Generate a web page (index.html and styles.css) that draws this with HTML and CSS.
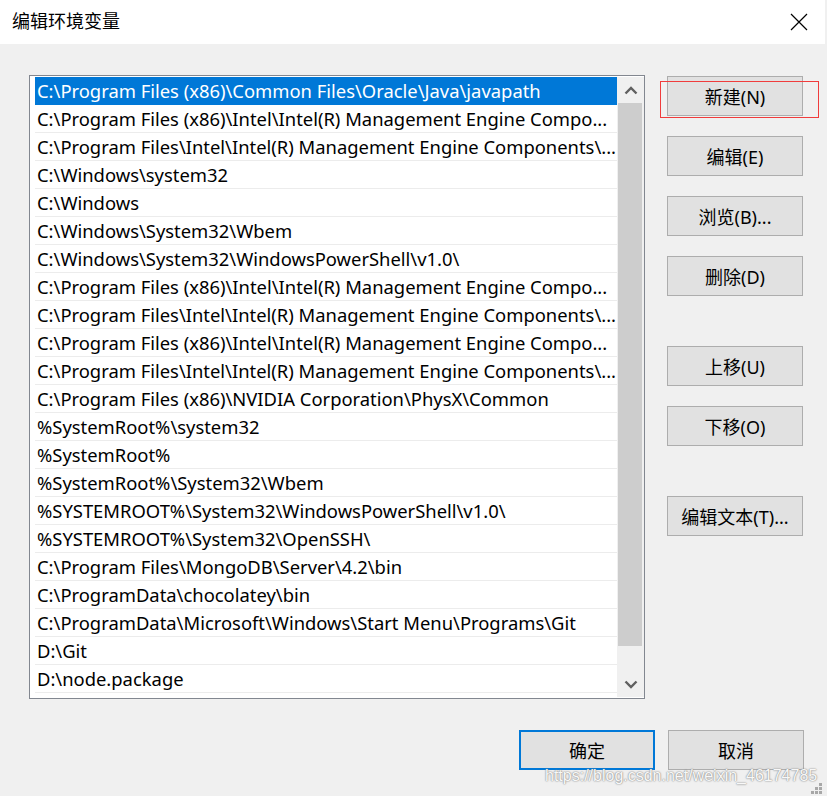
FILE: index.html
```html
<!DOCTYPE html>
<html>
<head>
  <meta charset="UTF-8">
  <title>编辑环境变量</title>
  <link rel="stylesheet" href="styles.css">
</head>
<body>
  <div class="dialog">
    <div class="titlebar">
      <span class="title">编辑环境变量</span>
      <svg class="close" width="18" height="18" viewBox="0 0 18 18">
        <path d="M1 1 L17 17 M17 1 L1 17" stroke="#000" stroke-width="1.2" fill="none"/>
      </svg>
    </div>

    <div class="content">
      <div class="main">
        <div class="listbox">
          <ul class="rows">
            <li class="selected">C:\Program Files (x86)\Common Files\Oracle\Java\javapath</li>
            <li>C:\Program Files (x86)\Intel\Intel(R) Management Engine Compo...</li>
            <li>C:\Program Files\Intel\Intel(R) Management Engine Components\...</li>
            <li>C:\Windows\system32</li>
            <li>C:\Windows</li>
            <li>C:\Windows\System32\Wbem</li>
            <li>C:\Windows\System32\WindowsPowerShell\v1.0\</li>
            <li>C:\Program Files (x86)\Intel\Intel(R) Management Engine Compo...</li>
            <li>C:\Program Files\Intel\Intel(R) Management Engine Components\...</li>
            <li>C:\Program Files (x86)\Intel\Intel(R) Management Engine Compo...</li>
            <li>C:\Program Files\Intel\Intel(R) Management Engine Components\...</li>
            <li>C:\Program Files (x86)\NVIDIA Corporation\PhysX\Common</li>
            <li>%SystemRoot%\system32</li>
            <li>%SystemRoot%</li>
            <li>%SystemRoot%\System32\Wbem</li>
            <li>%SYSTEMROOT%\System32\WindowsPowerShell\v1.0\</li>
            <li>%SYSTEMROOT%\System32\OpenSSH\</li>
            <li>C:\Program Files\MongoDB\Server\4.2\bin</li>
            <li>C:\ProgramData\chocolatey\bin</li>
            <li>C:\ProgramData\Microsoft\Windows\Start Menu\Programs\Git</li>
            <li>D:\Git</li>
            <li>D:\node.package</li>
          </ul>
          <div class="scrollbar">
            <div class="arrow">
              <svg width="14" height="9" viewBox="0 0 14 9"><path d="M1.5 7.5 L7 2 L12.5 7.5" stroke="#606060" stroke-width="2.4" fill="none"/></svg>
            </div>
            <div class="thumb"></div>
            <div class="track"></div>
            <div class="arrow">
              <svg width="14" height="9" viewBox="0 0 14 9"><path d="M1.5 1.5 L7 7 L12.5 1.5" stroke="#606060" stroke-width="2.4" fill="none"/></svg>
            </div>
          </div>
        </div>

        <div class="side">
          <div class="group">
            <button class="btn">新建(N)</button>
            <button class="btn">编辑(E)</button>
            <button class="btn">浏览(B)...</button>
            <button class="btn">删除(D)</button>
          </div>
          <div class="group">
            <button class="btn">上移(U)</button>
            <button class="btn">下移(O)</button>
          </div>
          <div class="group">
            <button class="btn">编辑文本(T)...</button>
          </div>
        </div>
      </div>

      <div class="footer">
        <button class="btn default">确定</button>
        <button class="btn">取消</button>
      </div>
    </div>

    <div class="highlight"></div>
    <div class="watermark">https://blog.csdn.net/weixin_46174785</div>
    <svg class="grip" width="12" height="12" viewBox="0 0 12 12">
      <rect x="8" y="0" width="3" height="3" fill="#a8a8a8"/>
      <rect x="4" y="4" width="3" height="3" fill="#a8a8a8"/>
      <rect x="8" y="4" width="3" height="3" fill="#a8a8a8"/>
      <rect x="0" y="8" width="3" height="3" fill="#a8a8a8"/>
      <rect x="4" y="8" width="3" height="3" fill="#a8a8a8"/>
      <rect x="8" y="8" width="3" height="3" fill="#a8a8a8"/>
    </svg>
  </div>
</body>
</html>
```

FILE: styles.css
```css
body {
  margin: 0;
  background-color: #f0f0f0;
  font-family: "Noto Sans", "Noto Sans CJK SC", sans-serif;
  font-size: 18px;
  color: #000;
}

.dialog {
  position: relative;
  width: 825px;
  height: 796px;
  background-color: #f0f0f0;
}

.titlebar {
  height: 44px;
  background-color: white;
  display: flex;
  align-items: center;
  justify-content: space-between;
  padding: 0 17px 0 12px;
}

.title {
  font-size: 18px;
  line-height: 20px;
  padding-bottom: 2px;
}

.close {
  display: block;
}

.content {
  padding: 31px 0 0 29px;
}

.main {
  display: flex;
  align-items: flex-start;
}

.listbox {
  display: flex;
  border: 1px solid #828790;
  background-color: white;
  padding: 1px 0 0 5px;
  height: 621px;
}

.rows {
  list-style: none;
  margin: 0;
  padding: 0;
  width: 582px;
}

.rows li {
  height: 27px;
  line-height: 27px;
  padding-left: 2px;
  font-size: 18.4px;
  border-bottom: 1px solid #ececec;
  white-space: nowrap;
  overflow: hidden;
  text-overflow: ellipsis;
}

.rows li.selected {
  background-color: #0078d7;
  color: white;
  border-bottom-color: #0078d7;
}

.scrollbar {
  width: 27px;
  height: 620px;
  background-color: #f0f0f0;
  display: flex;
  flex-direction: column;
}

.arrow {
  height: 26px;
  display: flex;
  align-items: center;
  justify-content: center;
}

.thumb {
  height: 543px;
  margin: 0 2px 0 1px;
  background-color: #cdcdcd;
}

.track {
  flex: 1;
}

.side {
  margin-left: 22px;
  padding-top: 1px;
  display: flex;
  flex-direction: column;
  gap: 50px;
}

.group {
  display: flex;
  flex-direction: column;
  gap: 20px;
}

.btn {
  width: 136px;
  height: 40px;
  background-color: #e1e1e1;
  border: 1px solid #adadad;
  font-family: "Noto Sans", "Noto Sans CJK SC", sans-serif;
  font-size: 18px;
  color: #000;
  padding: 0;
}

.btn.default {
  border: 2px solid #0078d7;
}

.footer {
  display: flex;
  gap: 13px;
  margin: 31px 0 0 490px;
}

.highlight {
  position: absolute;
  left: 660px;
  top: 81px;
  width: 157px;
  height: 35px;
  border: 1px solid #f03c3c;
}

.watermark {
  position: absolute;
  left: 545px;
  top: 767px;
  font-family: "Liberation Sans", Arial, sans-serif;
  font-size: 16px;
  color: rgba(255, 255, 255, 0.95);
  text-shadow: 0 0 2px #8a8a8a, 0 0 1px #8a8a8a;
}

.grip {
  position: absolute;
  right: 2px;
  bottom: 1px;
}
```
